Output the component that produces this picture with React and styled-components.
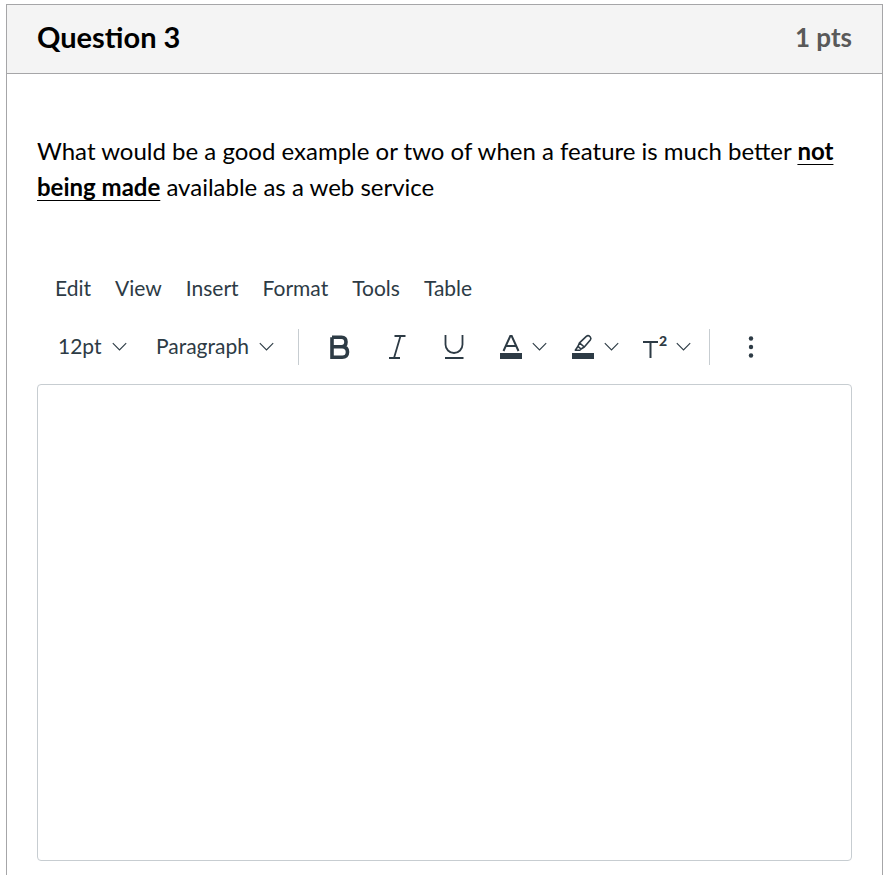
import styled, { createGlobalStyle } from 'styled-components'

const GlobalStyle = createGlobalStyle`
  * {
    box-sizing: border-box;
  }

  body {
    margin: 0;
    background: #fff;
    font-family: Lato, 'Liberation Sans', sans-serif;
    color: #000;
  }

  button,
  select,
  textarea {
    font-family: inherit;
  }
`

const Card = styled.section`
  min-height: calc(100vh - 4px);
  margin: 4px 13px 0 6px;
  border: 1px solid #a6a6a8;
  border-bottom: none;
`

const Header = styled.header`
  display: flex;
  justify-content: space-between;
  align-items: center;
  height: 69px;
  padding: 0 30px 4px;
  background: #f4f4f4;
  border-bottom: 1px solid #a6a6a8;
`

const Title = styled.h2`
  margin: 0;
  font-size: 29px;
  line-height: 36px;
  font-weight: bold;
`

const Points = styled.span`
  font-size: 26px;
  line-height: 36px;
  font-weight: bold;
  color: #595959;
`

const Body = styled.div`
  padding: 59px 30px 14px;
`

const Prompt = styled.p`
  margin: 0 0 70px;
  font-size: 24px;
  line-height: 36px;

  strong {
    text-decoration: underline;
    text-decoration-thickness: 1px;
    text-underline-offset: 4px;
  }
`

const MenuBar = styled.nav`
  display: flex;
  gap: 24px;
  padding: 0 18px;
  margin-bottom: 28px;
`

const MenuItem = styled.button`
  padding: 0;
  border: none;
  background: none;
  color: #2d3b45;
  font-size: 21px;
  line-height: 26px;
  cursor: pointer;
`

const Toolbar = styled.div`
  display: flex;
  align-items: center;
  height: 36px;
  padding-left: 21px;
  margin-bottom: 19px;
`

const SelectWrap = styled.div`
  display: grid;
  align-items: center;
  width: ${(props) => props.$width};
  margin-right: ${(props) => props.$gap};

  > * {
    grid-area: 1 / 1;
  }

  svg {
    justify-self: end;
    pointer-events: none;
  }
`

const Select = styled.select`
  appearance: none;
  width: 100%;
  height: 36px;
  padding: 0 0 4px;
  border: none;
  background: none;
  color: #2d3b45;
  font-size: 21px;
  cursor: pointer;
`

const Divider = styled.span`
  width: 1px;
  height: 36px;
  margin: 0 12px 0 11px;
  background: #c7cdd1;
`

const ToolButton = styled.button`
  display: flex;
  justify-content: center;
  align-items: center;
  width: 57px;
  height: 36px;
  padding: 0;
  border: none;
  background: none;
  color: #2d3b45;
  cursor: pointer;
`

const SplitButton = styled(ToolButton)`
  width: 72px;
  gap: 8px;
  padding: 0 6px 0 16px;
`

const Icon = styled.svg`
  display: block;
  flex: none;
  overflow: visible;
  fill: none;
  stroke: #2d3b45;
  stroke-width: ${(props) => props.$stroke || 2};
`

const Editor = styled.textarea`
  display: block;
  width: 100%;
  height: 477px;
  padding: 16px;
  border: 1px solid #c7cdd1;
  border-radius: 4px;
  background: #fff;
  font-size: 16px;
  resize: none;
`

const menus = ['Edit', 'View', 'Insert', 'Format', 'Tools', 'Table']

function Chevron() {
  return (
    <Icon $stroke={1.1} width="16" height="10" viewBox="0 0 16 10" aria-hidden="true">
      <path d="M.8 1.200 7.500 8 14.200 1.200" />
    </Icon>
  )
}

function BoldIcon() {
  return (
    <Icon $stroke={3.6} width="25" height="26" viewBox="0 0 25 26">
      <path d="M5 3.300H14.500Q19 3.300 19 8T14.500 12.700H5M5 12.700H15Q20.500 12.700 20.500 18T15 23.200H5V3.300" />
    </Icon>
  )
}

function ItalicIcon() {
  return (
    <Icon $stroke={1.8} width="25" height="26" viewBox="0 0 25 26">
      <path d="M10.500 2H21.500M5 24H16M16.500 2 10 24" />
    </Icon>
  )
}

function UnderlineIcon() {
  return (
    <Icon $stroke={1.8} width="25" height="26" viewBox="0 0 25 26">
      <path d="M4.500 1V10.500A8.500 8.500 0 0 0 21.500 10.500V1M4 24H22.500" />
    </Icon>
  )
}

function TextColorIcon() {
  return (
    <Icon width="26" height="26" viewBox="0 0 26 26">
      <path d="M5.500 17 12.300 2H13.700L20.500 17M8 12H18" />
      <rect x="2" y="19" width="22" height="6" fill="#2d3b45" stroke="none" />
    </Icon>
  )
}

function HighlightIcon() {
  return (
    <Icon $stroke={1.6} width="26" height="26" viewBox="0 0 26 26" strokeLinejoin="round">
      <path d="M9.500 8.800 16.300 2.300Q18 1 19.500 2.200L20.300 3Q21.500 4.300 20.300 6L14.300 13M9.500 8.800 8 12.300 11 15 14.300 13ZM8 12.300 5.300 16.200H9.800L11 15" />
    </Icon>
  )
}

function HighlightColorIcon() {
  return (
    <Icon width="26" height="26" viewBox="0 0 26 26">
      <HighlightIcon />
      <rect x="2" y="19" width="22" height="6" fill="#2d3b45" stroke="none" />
    </Icon>
  )
}

const IconText = styled.text`
  fill: #2d3b45;
  stroke: none;
  font-size: 14px;
  font-weight: 900;
`

function SuperscriptIcon() {
  return (
    <Icon width="26" height="26" viewBox="0 0 26 26">
      <path d="M1 8H16M8.500 8V24" />
      <IconText x="17" y="12">
        2
      </IconText>
    </Icon>
  )
}

function MoreIcon() {
  return (
    <Icon width="25" height="26" viewBox="0 0 25 26">
      <g fill="#2d3b45" stroke="none">
        <circle cx="13" cy="4.500" r="2.200" />
        <circle cx="13" cy="13" r="2.200" />
        <circle cx="13" cy="21.500" r="2.200" />
      </g>
    </Icon>
  )
}

function App() {
  return (
    <>
      <GlobalStyle />
      <Card>
        <Header>
          <Title>Question 3</Title>
          <Points>1 pts</Points>
        </Header>
        <Body>
          <Prompt id="prompt">
            What would be a good example or two of when a feature is much better{' '}
            <strong>not being made</strong> available as a web service
          </Prompt>
          <MenuBar>
            {menus.map((name) => (
              <MenuItem key={name} type="button">
                {name}
              </MenuItem>
            ))}
          </MenuBar>
          <Toolbar>
            <SelectWrap $width="70px" $gap="28px">
              <Select aria-label="Font size">
                <option>12pt</option>
              </Select>
              <Chevron />
            </SelectWrap>
            <SelectWrap $width="119px" $gap="12px">
              <Select aria-label="Block format">
                <option>Paragraph</option>
              </Select>
              <Chevron />
            </SelectWrap>
            <Divider />
            <ToolButton type="button" aria-label="Bold">
              <BoldIcon />
            </ToolButton>
            <ToolButton type="button" aria-label="Italic">
              <ItalicIcon />
            </ToolButton>
            <ToolButton type="button" aria-label="Underline">
              <UnderlineIcon />
            </ToolButton>
            <SplitButton type="button" aria-label="Text color">
              <TextColorIcon />
              <Chevron />
            </SplitButton>
            <SplitButton type="button" aria-label="Highlight color">
              <HighlightColorIcon />
              <Chevron />
            </SplitButton>
            <SplitButton type="button" aria-label="Superscript">
              <SuperscriptIcon />
              <Chevron />
            </SplitButton>
            <Divider />
            <ToolButton type="button" aria-label="More">
              <MoreIcon />
            </ToolButton>
          </Toolbar>
          <Editor aria-labelledby="prompt" />
        </Body>
      </Card>
    </>
  )
}

export default App
